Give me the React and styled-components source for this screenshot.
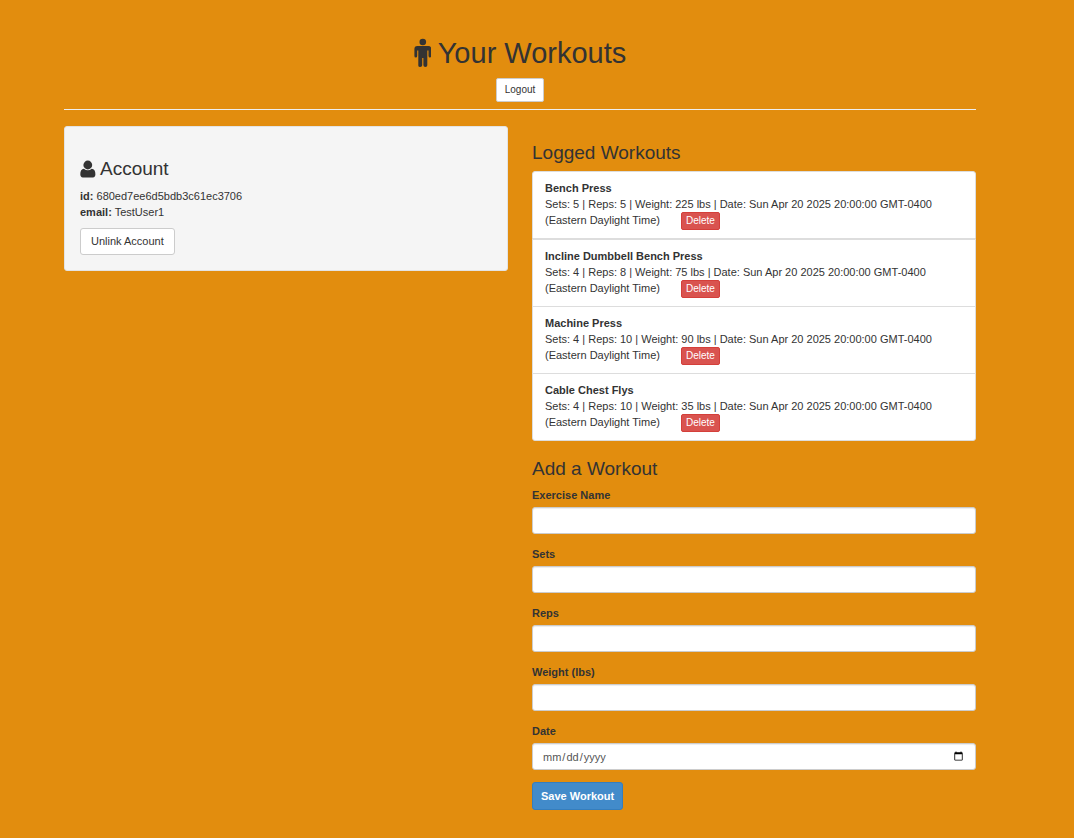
import React from "react";
import styled, { createGlobalStyle } from "styled-components";

const GlobalStyle = createGlobalStyle`
  *, *::before, *::after { box-sizing: border-box; }
  body {
    margin: 0;
    background: #e28d0e;
    color: #333;
    font: 11px/16px "Liberation Sans", Arial, sans-serif;
  }
  button, input { font-family: inherit; }
`;

const Page = styled.div`
  padding: 37px 98px 28px 64px;
`;

const Header = styled.header`
  display: flex;
  flex-direction: column;
  align-items: center;
  padding-bottom: 7px;
  margin-bottom: 16px;
  border-bottom: 1px solid #eee;
`;

const Title = styled.h1`
  display: flex;
  align-items: center;
  gap: 7px;
  margin: 0 0 9px;
  font-size: 29px;
  line-height: 32px;
  font-weight: 400;
`;

const SectionTitle = styled.h3`
  display: flex;
  align-items: center;
  gap: 4px;
  margin: 16px 0 8px;
  font-size: 19px;
  line-height: 21px;
  font-weight: 400;
`;

const Glyph = styled.svg`
  flex: none;
  fill: currentColor;
`;

const variants = {
  plain: { bg: "#fff", border: "#ccc", color: "#333" },
  danger: { bg: "#d9534f", border: "#d43f3a", color: "#fff" },
  primary: { bg: "#428bca", border: "#357ebd", color: "#fff" },
};

const sizes = {
  xs: { font: 10, line: 16, pad: "0 4px", radius: 2 },
  sm: { font: 10, line: 14, pad: "4px 8px", radius: 2 },
  md: { font: 11, line: 15, pad: "5px 10px", radius: 3 },
  lg: { font: 11, line: 16, pad: "5px 8px", radius: 3 },
};

const Button = styled.button`
  display: inline-block;
  padding: ${(p) => sizes[p.$size].pad};
  font-size: ${(p) => sizes[p.$size].font}px;
  line-height: ${(p) => sizes[p.$size].line}px;
  font-weight: ${(p) => (p.$bold ? 700 : 400)};
  color: ${(p) => variants[p.$variant].color};
  background: ${(p) => variants[p.$variant].bg};
  border: 1px solid ${(p) => variants[p.$variant].border};
  border-radius: ${(p) => sizes[p.$size].radius}px;
  white-space: nowrap;
  cursor: pointer;
`;

const Columns = styled.main`
  display: grid;
  grid-template-columns: repeat(2, minmax(0, 1fr));
  align-items: start;
  gap: 24px;
`;

const Well = styled.section`
  padding: 15px;
  background: #f5f5f5;
  border: 1px solid #e3e3e3;
  border-radius: 3px;
`;

const AccountText = styled.p`
  margin: 9px 0 8px;
`;

const WorkoutList = styled.ul`
  list-style: none;
  margin: 0 0 17px;
  padding: 0;
`;

const WorkoutItem = styled.li`
  padding: 8px 12px;
  background: #fff;
  border: 1px solid #ddd;

  & + & + & { margin-top: -1px; }
  &:first-child { border-radius: 3px 3px 0 0; }
  &:last-child { border-radius: 0 0 3px 3px; }
`;

const WorkoutName = styled.strong`
  display: block;
`;

const DeleteButton = styled(Button)`
  margin-left: 18px;
  vertical-align: middle;
`;

const Field = styled.div`
  margin-bottom: 12px;
`;

const Label = styled.label`
  display: block;
  margin-bottom: 4px;
  font-weight: 700;
`;

const Input = styled.input`
  display: block;
  width: 100%;
  height: 27px;
  padding: 4px 9px;
  font-size: 11px;
  line-height: 16px;
  color: #555;
  background: #fff;
  border: 1px solid #ccc;
  border-radius: 3px;
  box-shadow: inset 0 1px 1px rgba(0, 0, 0, 0.075);

  &::-webkit-calendar-picker-indicator {
    width: 11px;
    height: 11px;
    padding: 2px;
  }
`;

const workouts = [
  { name: "Bench Press", sets: 5, reps: 5, weight: 225 },
  { name: "Incline Dumbbell Bench Press", sets: 4, reps: 8, weight: 75 },
  { name: "Machine Press", sets: 4, reps: 10, weight: 90 },
  { name: "Cable Chest Flys", sets: 4, reps: 10, weight: 35 },
];
const date = "Sun Apr 20 2025 20:00:00 GMT-0400 (Eastern Daylight Time)";

const fields = [
  { id: "name", label: "Exercise Name", type: "text" },
  { id: "sets", label: "Sets", type: "number" },
  { id: "reps", label: "Reps", type: "number" },
  { id: "weight", label: "Weight (lbs)", type: "number" },
  { id: "date", label: "Date", type: "date" },
];

const MaleIcon = () => (
  <Glyph width="17" height="30" viewBox="0 0 17 30" aria-hidden="true">
    <circle cx="8.800" cy="4" r="3.300" />
    <path d="M3.300 8H14.300Q17.300 8 17.300 11V18Q17.300 19.500 16 19.500T14.500 18V12.500H13.300V27.300Q13.300 29 11.400 29T9.400 27.300V20H8.200V27.300Q8.200 29 6.200 29T4.300 27.300V12.500H3.200V18Q3.200 19.500 1.800 19.500T.4 18V11Q.4 8 3.300 8Z" />
  </Glyph>
);

const UserIcon = () => (
  <Glyph width="16" height="18" viewBox="0 0 16 18" aria-hidden="true">
    <circle cx="7.800" cy="5" r="4.400" />
    <path d="M3.900 8.700Q5.700 10.300 7.800 10.300T11.700 8.700Q15.400 8.900 15.400 14.300Q15.400 17.400 12.900 17.400H2.800Q.3 17.400 .3 14.300Q.3 8.900 3.900 8.700Z" />
  </Glyph>
);

export default function App() {
  return (
    <>
      <GlobalStyle />
      <Page>
        <Header>
          <Title><MaleIcon />Your Workouts</Title>
          <Button type="button" $variant="plain" $size="sm">Logout</Button>
        </Header>
        <Columns>
          <Well>
            <SectionTitle><UserIcon />Account</SectionTitle>
            <AccountText>
              <strong>id:</strong> 680ed7ee6d5bdb3c61ec3706<br />
              <strong>email:</strong> TestUser1
            </AccountText>
            <Button type="button" $variant="plain" $size="md">Unlink Account</Button>
          </Well>
          <section>
            <SectionTitle>Logged Workouts</SectionTitle>
            <WorkoutList>
              {workouts.map((w) => (
                <WorkoutItem key={w.name}>
                  <WorkoutName>{w.name}</WorkoutName>
                  {`Sets: ${w.sets} | Reps: ${w.reps} | Weight: ${w.weight} lbs | Date: ${date} `}
                  <DeleteButton type="button" $variant="danger" $size="xs">Delete</DeleteButton>
                </WorkoutItem>
              ))}
            </WorkoutList>
            <SectionTitle>Add a Workout</SectionTitle>
            <form onSubmit={(e) => e.preventDefault()}>
              {fields.map((f) => (
                <Field key={f.id}>
                  <Label htmlFor={f.id}>{f.label}</Label>
                  <Input id={f.id} name={f.id} type={f.type} />
                </Field>
              ))}
              <Button type="submit" $variant="primary" $size="lg" $bold>Save Workout</Button>
            </form>
          </section>
        </Columns>
      </Page>
    </>
  );
}
